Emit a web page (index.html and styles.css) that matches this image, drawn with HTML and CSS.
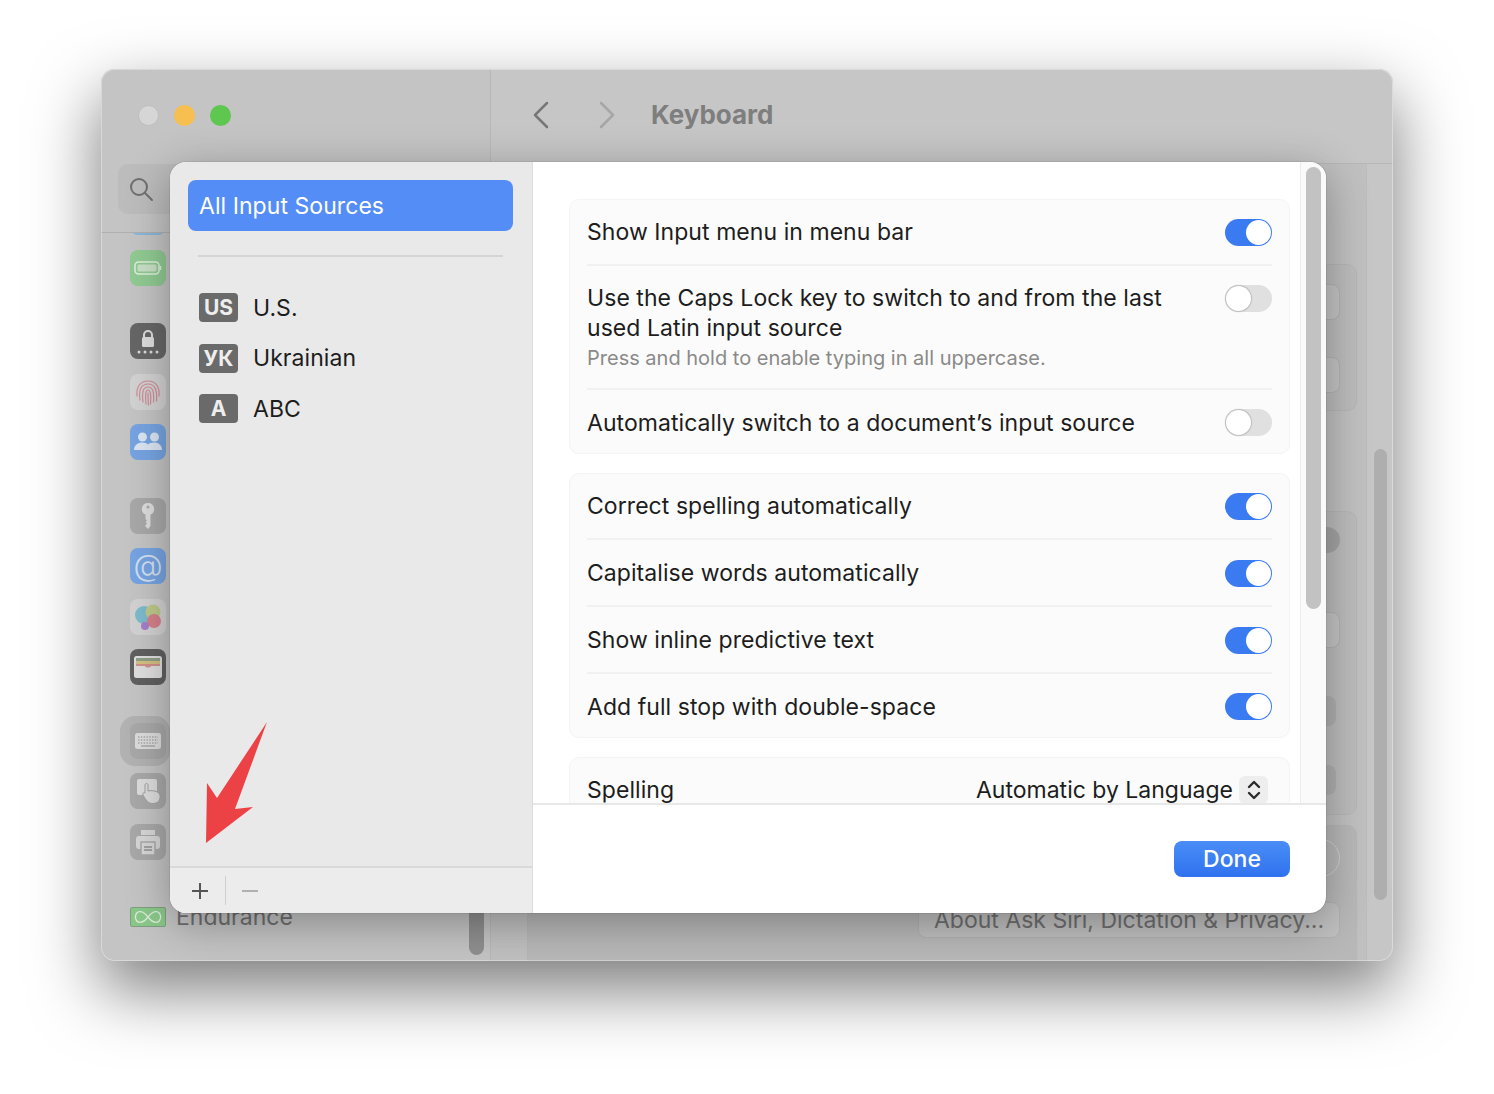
FILE: index.html
```html
<!DOCTYPE html>
<html lang="en">
<head>
    <meta charset="UTF-8">
    <title>Keyboard</title>
    <link rel="stylesheet" href="styles.css">
</head>
<body>
    <div class="window">
        <!-- settings sidebar, dimmed behind the sheet -->
        <aside class="sidebar">
            <div class="traffic">
                <span class="light light-close"></span>
                <span class="light light-min"></span>
                <span class="light light-max"></span>
            </div>
            <div class="search">
                <svg width="26" height="26" viewBox="0 0 26 26" fill="none" stroke="#6f6f6f" stroke-width="2"><circle cx="11" cy="11" r="8"/><path d="M17 17l7 7" stroke-linecap="round"/></svg>
            </div>
            <div class="side-list">
                <div class="tile tile-cut"></div>

                <div class="tile tile-green">
                    <svg width="36" height="36" viewBox="0 0 36 36" fill="none"><rect x="5" y="12" width="24" height="12" rx="3.5" stroke="#dff0dc" stroke-width="1.5"/><rect x="7.5" y="14.5" width="19" height="7" rx="1.5" fill="#c9dfc6"/><path d="M30.5 16v4" stroke="#dff0dc" stroke-width="1.5"/></svg>
                </div>

                <div class="side-group">
                    <div class="tile tile-dark">
                        <svg width="36" height="36" viewBox="0 0 36 36"><path d="M14 15v-3a4 4 0 0 1 8 0v3" fill="none" stroke="#dcdcdc" stroke-width="2"/><rect x="12" y="14" width="12" height="10" rx="1.5" fill="#dcdcdc"/><g fill="#dcdcdc"><circle cx="9" cy="29" r="1.5"/><circle cx="15" cy="29" r="1.5"/><circle cx="21" cy="29" r="1.5"/><circle cx="27" cy="29" r="1.5"/></g></svg>
                    </div>
                    <div class="tile tile-light">
                        <svg width="36" height="36" viewBox="0 0 36 36" fill="none" stroke="#cf8c96" stroke-width="1.2" stroke-linecap="round"><path d="M7 22c-1-10 4-15 11-15s12 5 11 15"/><path d="M10 26c-1.500-10 1-16 8-16s9.500 6 8.500 17"/><path d="M13 28c-1-9-.5-15 5-15s6 6 5.500 15"/><path d="M16 30c-.5-7-1-14 2-14s3 7 2.500 14"/><path d="M18 19c0 4 .3 8 .5 12"/></svg>
                    </div>
                    <div class="tile tile-blue">
                        <svg width="36" height="36" viewBox="0 0 36 36" fill="#dbe5f2"><circle cx="12.500" cy="13" r="4.500"/><circle cx="24.500" cy="13" r="4.500"/><path d="M4 26c0-5 4-7.500 8.500-7.500 2.500 0 4.500.7 5.500 2 1-1.300 3-2 6-2 4.500 0 8 2.500 8 7.500z"/></svg>
                    </div>
                </div>

                <div class="side-group">
                    <div class="tile tile-gray">
                        <svg width="36" height="36" viewBox="0 0 36 36" fill="#dcdcdc"><path d="M18 5a6 6 0 0 1 2.500 11.500V28L18 31l-2.500-2.500V27l1.500-1.500-1.500-1.500 1.500-1.500-1.500-1.500v-4.500A6 6 0 0 1 18 5z"/><circle cx="18" cy="9" r="1.500" fill="#a8a8a8"/></svg>
                    </div>
                    <div class="tile tile-blue at-sign">@</div>
                    <div class="tile tile-light">
                        <svg width="36" height="36" viewBox="0 0 36 36"><circle cx="14" cy="16" r="9" fill="#7dbacd"/><circle cx="23" cy="13" r="7.500" fill="#bcc98a"/><circle cx="24" cy="22" r="7" fill="#d5808a"/><circle cx="15" cy="27" r="4" fill="#a67fcb"/></svg>
                    </div>
                    <div class="tile tile-wallet">
                        <svg width="36" height="36" viewBox="0 0 36 36"><rect x="4" y="7" width="28" height="22" rx="2.500" fill="#dedede"/><rect x="6" y="9" width="24" height="3" fill="#8f9f86"/><rect x="6" y="12" width="24" height="3" fill="#d2bf82"/><path d="M6 15h24v2H21c-.5 2-5.500 2-6 0H6z" fill="#d0908a"/></svg>
                    </div>
                </div>

                <div class="side-group">
                    <div class="tile tile-gray tile-selected">
                        <svg width="36" height="36" viewBox="0 0 36 36"><rect x="5" y="10" width="26" height="16" rx="2.500" fill="#dcdcdc"/><path d="M8 14h20M8 17h20M8 20h20" stroke="#a8a8a8" stroke-width="1.500" stroke-dasharray="1.500 1.300"/><path d="M11 23h14" stroke="#a8a8a8" stroke-width="1.500"/></svg>
                    </div>
                    <div class="tile tile-gray">
                        <svg width="36" height="36" viewBox="0 0 36 36"><rect x="7" y="6" width="20" height="16" rx="2" fill="#dcdcdc"/><path d="M15 12c0-2 3-2 3 0v6c3-1 9 0 11 2 2 3 1 7-1 9-3 2-8 2-10 0-2-2-4-5-5-7-1-2 1-3 2-2z" fill="#dcdcdc" stroke="#a0a0a0"/></svg>
                    </div>
                    <div class="tile tile-gray">
                        <svg width="36" height="36" viewBox="0 0 36 36"><rect x="11" y="6" width="14" height="5" fill="#d6d6d6"/><rect x="6" y="12" width="24" height="13" rx="3" fill="#d6d6d6"/><rect x="11" y="18" width="14" height="13" fill="#d6d6d6" stroke="#a8a8a8" stroke-width="1.500"/><path d="M14 23h8M14 26h8" stroke="#909090" stroke-width="1.300"/></svg>
                    </div>
                </div>

                <div class="endurance">
                    <svg class="endurance-icon" width="36" height="20" viewBox="0 0 36 20" fill="none"><path d="M18 10c-3-4-6-6-9-6s-5 3-5 6 2 6 5 6 6-2 9-6 6-6 9-6 5 3 5 6-2 6-5 6-6-2-9-6z" stroke="#dcebd8" stroke-width="1.500"/></svg>
                    <span>Endurance</span>
                </div>
            </div>
            <div class="side-thumb"></div>
        </aside>

        <!-- settings pane, dimmed behind the sheet -->
        <main class="pane">
            <header class="toolbar">
                <svg width="16" height="28" viewBox="0 0 16 28" fill="none" stroke="#777" stroke-width="2.500" stroke-linecap="round" stroke-linejoin="round"><path d="M14 2L2 14l12 12"/></svg>
                <svg class="forward" width="16" height="28" viewBox="0 0 16 28" fill="none" stroke="#a6a6a6" stroke-width="2.500" stroke-linecap="round" stroke-linejoin="round"><path d="M2 2l12 12L2 26"/></svg>
                <h1>Keyboard</h1>
            </header>
            <div class="pane-body">
                <div class="pane-scroll">
                    <div class="back-card back-card-one">
                        <div class="back-row"><span class="stub"></span></div>
                        <div class="back-row"><span class="stub"></span></div>
                    </div>
                    <div class="back-card back-card-two">
                        <div class="back-row back-row-a"><span class="knob"></span></div>
                        <div class="back-row back-row-b"><span class="stub"></span></div>
                        <div class="back-row back-row-c"><span class="stub stub-small"></span></div>
                        <div class="back-row back-row-c"><span class="stub stub-small"></span></div>
                    </div>
                    <div class="back-card back-card-three">
                        <div class="back-circle"></div>
                        <button class="about-btn">About Ask Siri, Dictation &amp; Privacy...</button>
                    </div>
                </div>
                <div class="pane-bar"><div class="pane-thumb"></div></div>
            </div>
        </main>

        <!-- input sources sheet -->
        <section class="sheet">
            <div class="sheet-side">
                <div class="side-top">
                    <div class="all-sources">All Input Sources</div>
                    <div class="sources-line"></div>
                    <ul class="sources">
                        <li><span class="badge">US</span>U.S.</li>
                        <li><span class="badge">УК</span>Ukrainian</li>
                        <li><span class="badge">A</span>ABC</li>
                    </ul>
                </div>
                <svg class="arrow" width="64" height="124" viewBox="0 0 64 124"><path d="M62 1L12 77 2 62 1 122 48 86 30 88z" fill="#ec4246"/></svg>
                <div class="side-tools">
                    <svg class="tool" width="18" height="18" viewBox="0 0 18 18" stroke="#555" stroke-width="2"><path d="M9 1v16M1 9h16"/></svg>
                    <span class="tool-line"></span>
                    <svg class="tool tool-minus" width="18" height="18" viewBox="0 0 18 18" stroke="#b0b0b0" stroke-width="2"><path d="M1 9h16"/></svg>
                </div>
            </div>
            <div class="sheet-main">
                <div class="sheet-scroll">
                    <div class="panel">
                        <div class="card">
                            <div class="row">
                                <span>Show Input menu in menu bar</span>
                                <span class="toggle on"></span>
                            </div>
                            <div class="row row-tall">
                                <div>
                                    <div>Use the Caps Lock key to switch to and from the last<br>used Latin input source</div>
                                    <div class="row-note">Press and hold to enable typing in all uppercase.</div>
                                </div>
                                <span class="toggle"></span>
                            </div>
                            <div class="row">
                                <span>Automatically switch to a document’s input source</span>
                                <span class="toggle"></span>
                            </div>
                        </div>
                        <div class="card">
                            <div class="row">
                                <span>Correct spelling automatically</span>
                                <span class="toggle on"></span>
                            </div>
                            <div class="row">
                                <span>Capitalise words automatically</span>
                                <span class="toggle on"></span>
                            </div>
                            <div class="row">
                                <span>Show inline predictive text</span>
                                <span class="toggle on"></span>
                            </div>
                            <div class="row">
                                <span>Add full stop with double-space</span>
                                <span class="toggle on"></span>
                            </div>
                        </div>
                        <div class="card">
                            <div class="row">
                                <span>Spelling</span>
                                <span class="select">Automatic by Language
                                    <span class="stepper">
                                        <svg width="14" height="22" viewBox="0 0 14 22" fill="none" stroke="#2c2c2c" stroke-width="2.400" stroke-linecap="round" stroke-linejoin="round"><path d="M2 8l5-5 5 5M2 14l5 5 5-5"/></svg>
                                    </span>
                                </span>
                            </div>
                        </div>
                    </div>
                    <div class="gutter"><div class="gutter-thumb"></div></div>
                </div>
                <footer class="sheet-foot">
                    <button class="done-btn">Done</button>
                </footer>
            </div>
        </section>
    </div>
</body>
</html>
```

FILE: styles.css
```css
* {
    box-sizing: border-box;
}
html {
    height: 100%;
}
body {
    min-height: 100%;
    margin: 0;
    padding: 69px 0 0 101px;
    background-color: #fff;
    font-family: Inter, "Liberation Sans", sans-serif;
    color: #1d1d1d;
}
.window {
    position: relative;
    display: flex;
    width: 1292px;
    height: 892px;
    border-radius: 14px;
    background-color: #c6c6c6;
    box-shadow: 0 28px 66px 2px rgba(0, 0, 0, 0.5);
}
.window::after {
    content: "";
    position: absolute;
    inset: 0;
    border-radius: 14px;
    box-shadow: inset 0 0 0 1px rgba(255, 255, 255, 0.35);
    pointer-events: none;
}

/* sidebar behind the sheet */
.sidebar {
    position: relative;
    display: flex;
    flex-direction: column;
    width: 390px;
    background-color: #c4c4c4;
    border-right: 1px solid #b8b8b8;
    border-radius: 14px 0 0 14px;
    overflow: hidden;
}
.traffic {
    display: flex;
    gap: 15px;
    height: 95px;
    padding: 36px 0 0 37px;
}
.light {
    width: 21px;
    height: 21px;
    border-radius: 50%;
}
.light-close {
    background-color: #d6d6d6;
    border: 1px solid #bdbdbd;
}
.light-min {
    background-color: #f6bf4f;
}
.light-max {
    background-color: #5dc74f;
}
.search {
    display: flex;
    align-items: center;
    width: 340px;
    height: 50px;
    margin-left: 17px;
    padding-left: 10px;
    background-color: #bcbcbc;
    border-radius: 10px;
}
.side-list {
    flex: 1;
    display: flex;
    flex-direction: column;
    gap: 14.5px;
    margin-top: 18px;
    padding-left: 29px;
    border-top: 1px solid #b0b0b0;
    overflow: hidden;
}
.side-group {
    display: flex;
    flex-direction: column;
    gap: 14.5px;
    margin-top: 23px;
}
.tile {
    flex: none;
    width: 36px;
    height: 36px;
    border-radius: 8px;
}
.tile-cut {
    margin-top: -34px;
    background-color: #8ab6d8;
}
.tile-green {
    background-color: #90ca92;
}
.tile-dark {
    background-color: #666;
}
.tile-light {
    background-color: #d2d2d2;
}
.tile-blue {
    background-color: #76a4e2;
}
.tile-gray {
    background-color: #a8a8a8;
}
.tile-wallet {
    background-color: #606060;
}
.tile-selected {
    box-shadow: -3px 0 0 7px #b2b2b2;
}
.at-sign {
    color: #d5e0f0;
    font-size: 30px;
    font-weight: 300;
    line-height: 34px;
    text-align: center;
}
.endurance {
    display: flex;
    align-items: center;
    gap: 10px;
    height: 20px;
    margin-top: 33px;
    color: #6f6f6f;
    font-size: 23px;
    white-space: nowrap;
}
.endurance-icon {
    flex: none;
    background-color: #8ac88a;
    border: 1px solid #7f9f7f;
    border-radius: 2px;
}
.side-thumb {
    position: absolute;
    right: 6px;
    bottom: 6px;
    width: 15px;
    height: 80px;
    background-color: #8f8f8f;
    border-radius: 8px;
}

/* pane behind the sheet */
.pane {
    flex: 1;
    display: flex;
    flex-direction: column;
    min-width: 0;
    border-radius: 0 14px 14px 0;
    overflow: hidden;
}
.toolbar {
    display: flex;
    align-items: center;
    flex: none;
    height: 95px;
    padding: 0 0 3px 42px;
    background-color: #c6c6c6;
    border-bottom: 1px solid #b6b6b6;
}
.forward {
    margin-left: 50px;
}
.toolbar h1 {
    margin: 0 0 0 36px;
    font-size: 26px;
    font-weight: 700;
    color: #7e7e7e;
}
.pane-body {
    flex: 1;
    display: flex;
    min-height: 0;
}
.pane-scroll {
    flex: 1;
    padding: 100px 9px 0 36px;
    background-color: #c0c0c0;
    overflow: hidden;
}
.pane-bar {
    flex: none;
    width: 27px;
    padding: 285px 6px 0 7px;
    background-color: #c6c6c6;
    border-left: 1px solid #bcbcbc;
}
.pane-thumb {
    height: 451px;
    background-color: #aeaeae;
    border-radius: 8px;
}
.back-card {
    background-color: #bcbcbc;
    border: 1px solid #b6b6b6;
    border-radius: 10px;
}
.back-card-one {
    height: 147px;
}
.back-card-one .back-row {
    height: 73px;
}
.back-card-two {
    height: 304px;
    margin-top: 100px;
}
.back-row {
    display: flex;
    align-items: center;
    justify-content: flex-end;
    padding-right: 16px;
}
.back-row-a {
    height: 72px;
    padding-bottom: 16px;
}
.back-row-b {
    height: 92px;
}
.back-row-c {
    height: 69px;
    padding-right: 20px;
}
.stub {
    width: 100px;
    height: 36px;
    background-color: #c4c4c4;
    border: 1px solid #b2b2b2;
    border-radius: 8px;
}
.stub-small {
    height: 30px;
    background-color: #b0b0b0;
    border: none;
}
.knob {
    width: 60px;
    height: 26px;
    background-color: #a4a4a4;
    border-radius: 13px;
}
.back-card-three {
    display: flex;
    flex-direction: column;
    align-items: flex-end;
    height: 170px;
    margin-top: 10px;
    padding: 13px 16px 0 0;
    background-color: #b8b8b8;
}
.back-circle {
    width: 38px;
    height: 38px;
    background-color: #b8b8b8;
    border: 1px solid #d0d0d0;
    border-radius: 50%;
}
.about-btn {
    width: 422px;
    height: 36px;
    margin-top: 25px;
    padding: 0;
    font-family: inherit;
    font-size: 23px;
    color: #6f6f6f;
    background-color: #c0c0c0;
    border: 1px solid #b2b2b2;
    border-radius: 8px;
}

/* sheet */
.sheet {
    position: absolute;
    top: 93px;
    left: 69px;
    z-index: 1;
    display: flex;
    width: 1156px;
    height: 751px;
    border-radius: 16px;
    overflow: hidden;
    background-color: #fff;
    box-shadow: 0 10px 44px rgba(0, 0, 0, 0.32), 0 0 1px rgba(0, 0, 0, 0.6);
    font-size: 23px;
    letter-spacing: 0.06px;
}
.sheet-side {
    position: relative;
    flex: none;
    display: flex;
    flex-direction: column;
    width: 363px;
    background-color: #e9e9e9;
    border-right: 1px solid #dcdcdc;
}
.side-top {
    flex: 1;
    padding: 18px 19px 0 18px;
}
.all-sources {
    height: 51px;
    padding-left: 11px;
    line-height: 53px;
    color: #fff;
    background-color: #538df5;
    border-radius: 8px;
}
.sources-line {
    height: 2px;
    margin: 24px 10px 0;
    background-color: #d4d4d4;
}
.sources {
    margin: 36px 0 0 11px;
    padding: 0;
    list-style: none;
}
.sources li {
    display: flex;
    align-items: center;
    gap: 15px;
    height: 29px;
    margin-bottom: 21.5px;
}
.badge {
    flex: none;
    width: 39px;
    height: 29px;
    font-size: 21px;
    font-weight: 700;
    line-height: 29px;
    text-align: center;
    color: #eee;
    background-color: #6a6a6a;
    border-radius: 4px;
}
.arrow {
    position: absolute;
    left: 35px;
    top: 559px;
}
.side-tools {
    flex: none;
    display: flex;
    align-items: center;
    height: 47px;
    padding-left: 21px;
    background-color: #ececec;
    border-top: 2px solid #d9d9d9;
}
.tool-line {
    width: 1px;
    height: 29px;
    margin: 0 15px 0 16px;
    background-color: #cfcfcf;
}
.sheet-main {
    flex: 1;
    display: flex;
    flex-direction: column;
    min-width: 0;
}
.sheet-scroll {
    flex: 1;
    display: flex;
    min-height: 0;
    overflow: hidden;
}
.panel {
    flex: 1;
    padding: 37px 10px 0 36px;
}
.card {
    margin-bottom: 19px;
    background-color: #fbfbfb;
    border: 1px solid #f4f4f4;
    border-radius: 10px;
}
.row {
    display: flex;
    align-items: center;
    justify-content: space-between;
    height: 67px;
    margin: 0 17px;
    padding-top: 1px;
    border-top: 2px solid #f1f1f1;
    white-space: nowrap;
}
.row:last-child {
    height: 65px;
    padding-top: 2px;
}
.row:first-child {
    height: 64px;
    padding-top: 0;
    border-top: none;
}
.row-tall {
    align-items: flex-start;
    height: 124px;
    padding-top: 17px;
    line-height: 30px;
}
.row-tall .toggle {
    margin-top: 2px;
}
.row-note {
    font-size: 20px;
    letter-spacing: 0;
    color: #8a8a8a;
}
.toggle {
    position: relative;
    flex: none;
    width: 47px;
    height: 27px;
    background-color: #e0e0e0;
    border-radius: 14px;
}
.toggle::after {
    content: "";
    position: absolute;
    top: 1px;
    left: 1px;
    width: 25px;
    height: 25px;
    background-color: #fff;
    border-radius: 50%;
    box-shadow: 0 0 1px 1px #bbbbbb;
}
.toggle.on {
    background-color: #3a7bf1;
}
.toggle.on::after {
    left: auto;
    right: 1px;
    box-shadow: none;
}
.select {
    display: flex;
    align-items: center;
    gap: 6px;
    letter-spacing: 0;
}
.stepper {
    display: flex;
    align-items: center;
    justify-content: center;
    width: 29px;
    height: 28px;
    background-color: #eeeeee;
    border-radius: 6px;
    margin-right: 4px;
}
.gutter {
    flex: none;
    width: 26px;
    padding: 5px 5px 0 5px;
    background-color: #fafafa;
    border-left: 1px solid #ececec;
}
.gutter-thumb {
    height: 442px;
    background-color: #c2c2c2;
    border-radius: 8px;
}
.sheet-foot {
    flex: none;
    display: flex;
    justify-content: flex-end;
    height: 110px;
    padding: 36px 36px 0 0;
    border-top: 2px solid #e8e8e8;
}
.done-btn {
    width: 116px;
    height: 36px;
    padding: 0;
    font-family: inherit;
    font-size: 23px;
    font-weight: 500;
    color: #fff;
    background: linear-gradient(#4a8df7, #2f72ee);
    border: none;
    border-radius: 8px;
}
```
